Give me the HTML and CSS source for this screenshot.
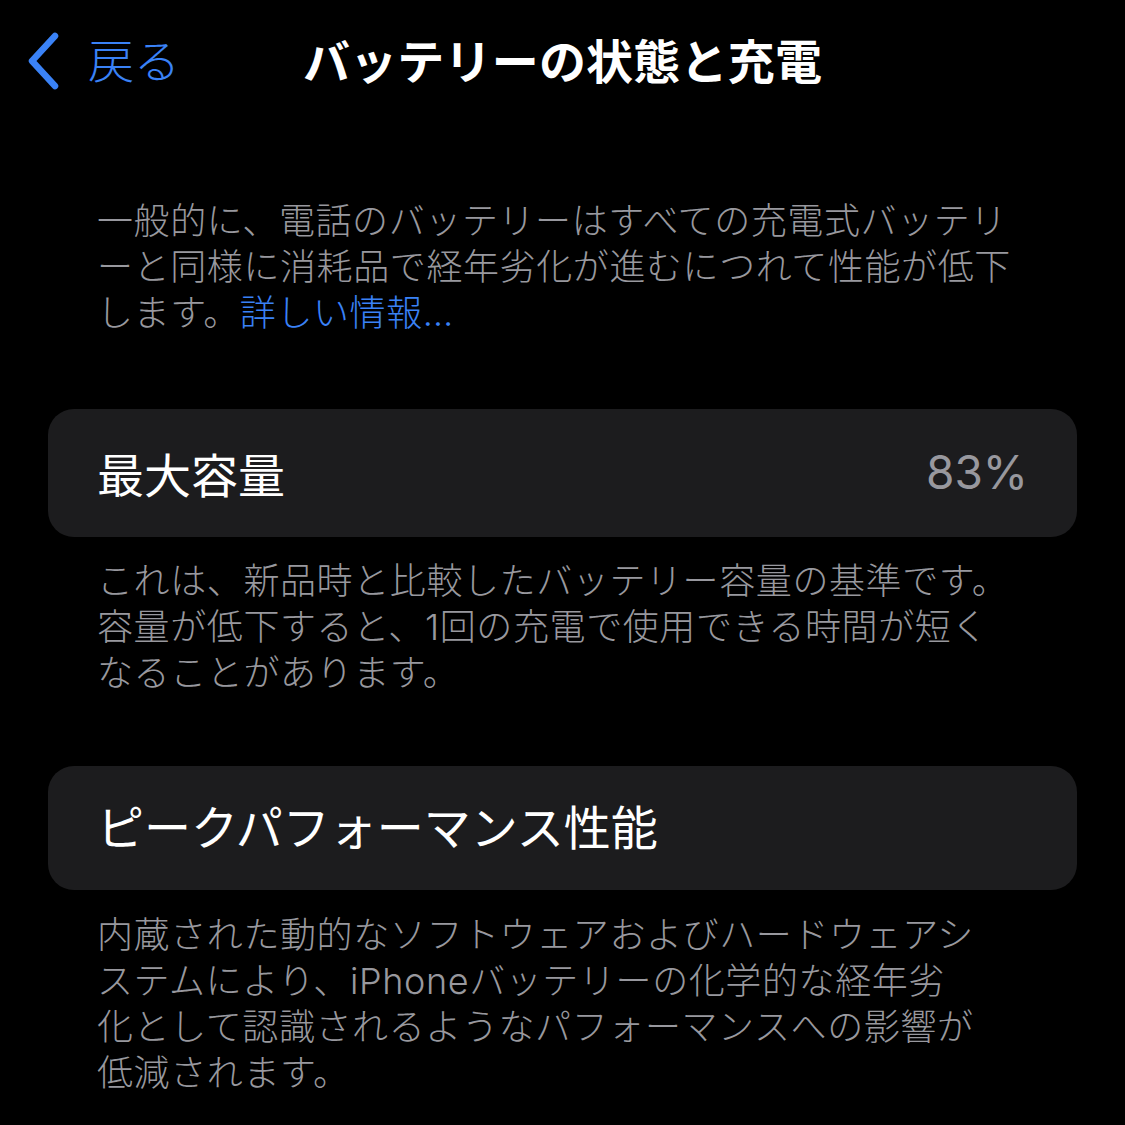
FILE: index.html
```html
<!DOCTYPE html>
<html lang="ja">
<head>
<meta charset="utf-8">
<title>バッテリーの状態と充電</title>
<link rel="stylesheet" href="styles.css">
</head>
<body>
<header class="nav">
  <a class="back" href="#">
    <svg class="chev" width="40" height="60" viewBox="0 0 40 60" aria-hidden="true">
      <path d="M31 6 L8 31 L31 56" fill="none" stroke="currentColor" stroke-width="6.5" stroke-linecap="round" stroke-linejoin="round"/>
    </svg>
    <span class="back-label">戻る</span>
  </a>
  <h1 class="title">バッテリーの状態と充電</h1>
  <div class="spacer"></div>
</header>
<main class="content">
  <p class="note note-intro">一般的に、電話のバッテリーはすべての充電式バッテリ<br>ーと同様に消耗品で経年劣化が進むにつれて性能が低下<br>します。<a class="link" href="#">詳しい情報…</a></p>

  <section class="card card-capacity">
    <span class="card-label">最大容量</span>
    <span class="card-value">83%</span>
  </section>
  <p class="note">これは、新品時と比較したバッテリー容量の基準です。<br>容量が低下すると、1回の充電で使用できる時間が短く<br>なることがあります。</p>

  <section class="card card-peak">
    <span class="card-label">ピークパフォーマンス性能</span>
  </section>
  <p class="note">内蔵された動的なソフトウェアおよびハードウェアシ<br>ステムにより、iPhoneバッテリーの化学的な経年劣<br>化として認識されるようなパフォーマンスへの影響が<br>低減されます。</p>
</main>
</body>
</html>
```

FILE: styles.css
```css
html, body {
  margin: 0;
  padding: 0;
  background: #000;
}
body {
  width: 1125px;
  min-height: 1125px;
  font-family: "Inter", "Noto Sans CJK JP", sans-serif;
  color: #fff;
  overflow: hidden;
}
.nav {
  height: 116px;
  display: grid;
  grid-template-columns: 1fr auto 1fr;
  align-items: center;
}
.back {
  display: flex;
  align-items: center;
  color: #3a82f6;
  text-decoration: none;
  padding-left: 24px;
}
.chev {
  display: block;
  margin-right: 24px;
  position: relative;
  top: 2px;
}
.back-label {
  font-family: "Noto Sans CJK JP", sans-serif;
  font-size: 46px;
  font-weight: 300;
  line-height: 1;
}
.title {
  margin: 0;
  font-family: "Noto Sans CJK JP", sans-serif;
  font-size: 47px;
  font-weight: 700;
  line-height: 1;
  letter-spacing: 0.2px;
  color: #fff;
}
.content {
  padding: 82px 48px 0 48px;
}
.note {
  margin: 0;
  padding: 0 49px;
  font-size: 36px;
  line-height: 46px;
  font-weight: 300;
  letter-spacing: 0.6px;
  color: #98989e;
  white-space: nowrap;
}
.note-intro {
  margin-bottom: 73px;
}
.link {
  color: #3a82f6;
  text-decoration: none;
}
.card {
  background: #1c1c1e;
  border-radius: 26px;
  display: flex;
  align-items: center;
  justify-content: space-between;
  padding: 0 49px;
  margin-bottom: 21px;
}
.card-capacity {
  height: 128px;
}
.card-peak {
  height: 124px;
  margin-top: 70px;
  margin-bottom: 22px;
}
.card-label {
  font-family: "Noto Sans CJK JP", sans-serif;
  font-size: 47px;
  font-weight: 400;
  line-height: 1;
  color: #fff;
  position: relative;
  top: -1px;
}
.card-peak .card-label {
  top: -4px;
}
.card-value {
  font-family: "Inter", sans-serif;
  font-size: 46px;
  font-weight: 400;
  color: #98989e;
  line-height: 1;
  position: relative;
  top: -1px;
}
```
